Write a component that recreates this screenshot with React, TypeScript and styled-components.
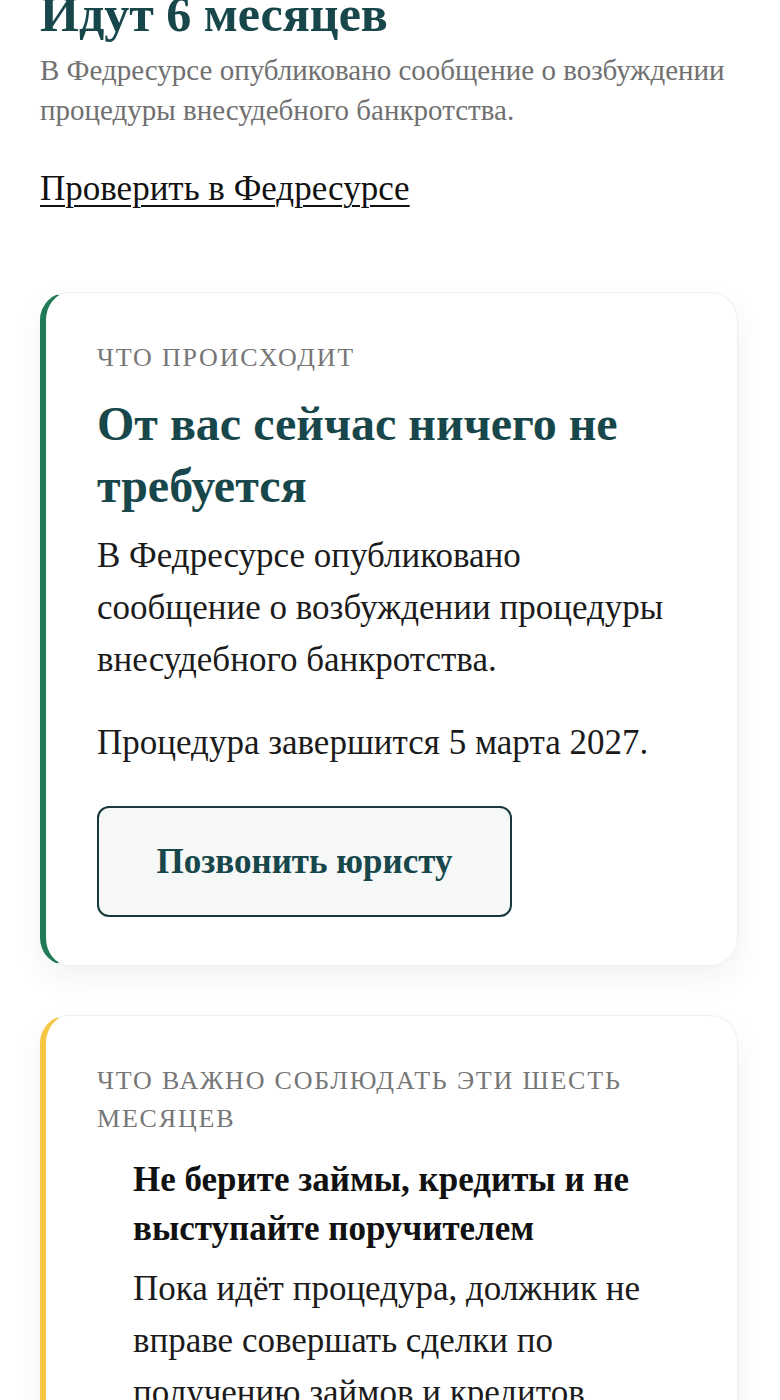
import React from "react";
import styled, { createGlobalStyle } from "styled-components";

const Global = createGlobalStyle`
  html, body { margin: 0; padding: 0; background: #ffffff; }
  body { font-family: "Liberation Serif", "Times New Roman", serif; color: #1b1b1b; }
  * { box-sizing: border-box; }
`;

const Page = styled.main`
  padding: 0 42px 40px 40px;
  overflow: hidden;
`;

const Heading = styled.h1`
  margin: -16px 0 0 0;
  font-size: 50px;
  line-height: 60px;
  font-weight: 700;
  color: #17474a;
`;

const Lead = styled.p`
  margin: 6px 0 0 0;
  font-size: 29px;
  line-height: 40px;
  color: #707070;
`;

const Link = styled.a`
  display: inline-block;
  margin-top: 39px;
  font-size: 35px;
  line-height: 40px;
  color: #111;
  text-decoration: underline;
  text-underline-offset: 5px;
  text-decoration-thickness: 2px;
`;

const Card = styled.section<{ $accent: "green" | "yellow" }>`
  margin-top: ${(p) => (p.$accent === "green" ? "83px" : "49px")};
  background: #fff;
  border: 1px solid #ecf2f0;
  border-left: 6px solid ${(p) => (p.$accent === "green" ? "#1f7a55" : "#f6c744")};
  border-radius: 28px;
  box-shadow: 0 12px 30px rgba(20, 40, 40, 0.06);
  padding: 46px 56px 48px 51px;
`;

const Label = styled.div`
  font-size: 26px;
  line-height: 38px;
  letter-spacing: 1.8px;
  text-transform: uppercase;
  color: #767676;
`;

const Title = styled.h2`
  margin: 16px 0 0 0;
  font-size: 48px;
  line-height: 62px;
  font-weight: 700;
  color: #17474a;
`;

const Body = styled.p<{ $gap: number }>`
  margin: ${(p) => p.$gap}px 0 0 0;
  font-size: 35px;
  line-height: 52px;
  color: #1b1b1b;
`;

const Button = styled.button`
  margin-top: 37px;
  width: 415px;
  height: 111px;
  border: 2px solid #17393b;
  border-radius: 12px;
  background: #f6f8f8;
  font-family: "Liberation Serif", "Times New Roman", serif;
  font-size: 35px;
  font-weight: 700;
  color: #17474a;
  cursor: pointer;
`;

const Rules = styled.ol`
  list-style: none;
  margin: 17px 0 0 0;
  padding: 0 0 0 36px;
`;

const Rule = styled.li``;

const RuleTitle = styled.h3`
  margin: 0;
  font-size: 35px;
  line-height: 49px;
  font-weight: 700;
  color: #111;
`;

export default function App() {
  return (
    <>
      <Global />
      <Page>
        <Heading>Идут 6 месяцев</Heading>
        <Lead>
          В Федресурсе опубликовано сообщение о возбуждении процедуры
          внесудебного банкротства.
        </Lead>
        <Link href="#">Проверить в Федресурсе</Link>

        <Card $accent="green">
          <Label>Что происходит</Label>
          <Title>От вас сейчас ничего не требуется</Title>
          <Body $gap={13}>
            В Федресурсе опубликовано сообщение о возбуждении процедуры
            внесудебного банкротства.
          </Body>
          <Body $gap={31}>Процедура завершится 5 марта 2027.</Body>
          <Button type="button">Позвонить юристу</Button>
        </Card>

        <Card $accent="yellow">
          <Label>Что важно соблюдать эти шесть месяцев</Label>
          <Rules>
            <Rule>
              <RuleTitle>Не берите займы, кредиты и не выступайте поручителем</RuleTitle>
              <Body $gap={10}>
                Пока идёт процедура, должник не вправе совершать сделки по
                получению займов и кредитов, выдавать поручительства и
                совершать иные обеспечительные сделки.
              </Body>
            </Rule>
          </Rules>
        </Card>
      </Page>
    </>
  );
}
